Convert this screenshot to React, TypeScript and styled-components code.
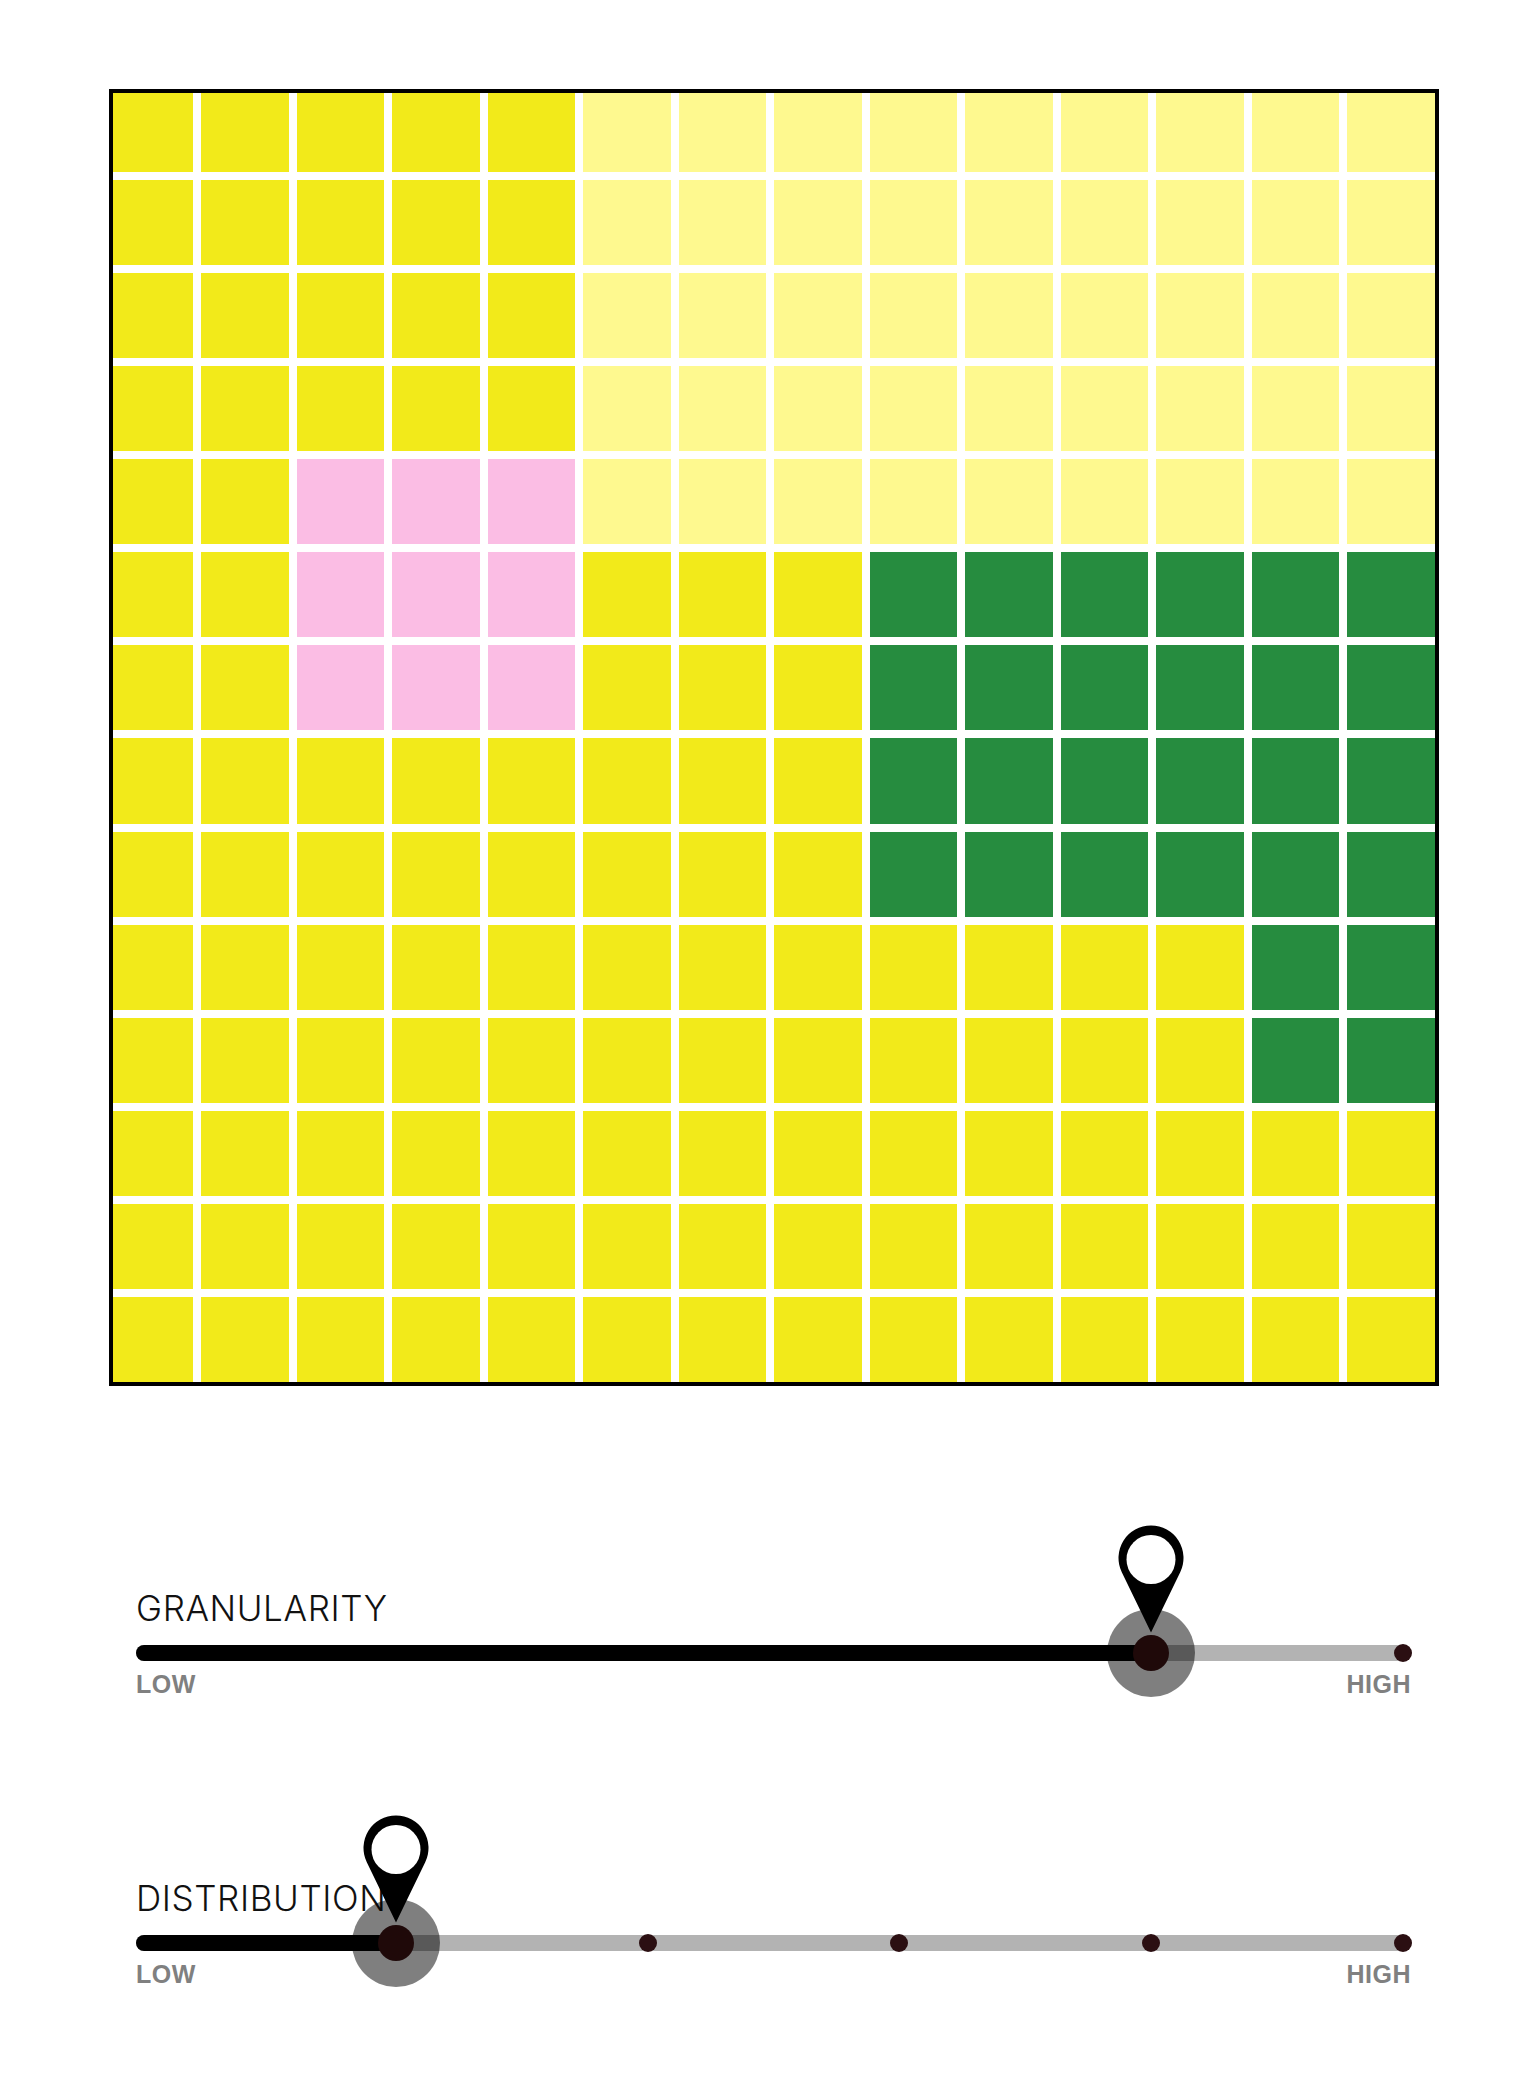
import styled, { createGlobalStyle } from 'styled-components';

type Tone = 'Y' | 'L' | 'P' | 'G';

const toneColors: Record<Tone, string> = {
  Y: '#f2ea1a',
  L: '#fef98f',
  P: '#fbbde4',
  G: '#268c3f',
};

const pattern = [
  'YYYYYLLLLLLLLL',
  'YYYYYLLLLLLLLL',
  'YYYYYLLLLLLLLL',
  'YYYYYLLLLLLLLL',
  'YYPPPLLLLLLLLL',
  'YYPPPYYYGGGGGG',
  'YYPPPYYYGGGGGG',
  'YYYYYYYYGGGGGG',
  'YYYYYYYYGGGGGG',
  'YYYYYYYYYYYYGG',
  'YYYYYYYYYYYYGG',
  'YYYYYYYYYYYYYY',
  'YYYYYYYYYYYYYY',
  'YYYYYYYYYYYYYY',
];

const GlobalStyle = createGlobalStyle`
  body {
    margin: 0;
    background: #fff;
    font-family: Inter, "Liberation Sans", sans-serif;
  }
`;

const Page = styled.div`
  padding: 89px 100px 80px 109px;
  width: 1330px;
`;

const Board = styled.div`
  box-sizing: border-box;
  width: 1330px;
  height: 1297px;
  border: 4px solid #000;
  background: #fff;
  display: grid;
  grid-template-columns: 80px repeat(13, 1fr);
  grid-template-rows: 79px repeat(13, 1fr);
  gap: 8px;
`;

const Cell = styled.div<{ $tone: Tone }>`
  background: ${(p) => toneColors[p.$tone]};
`;

const Controls = styled.div`
  margin-top: 205px;
  padding: 0 28px 0 27px;
  display: flex;
  flex-direction: column;
  gap: 184px;
`;

const SliderBlock = styled.div`
  display: flex;
  flex-direction: column;
`;

const Label = styled.div`
  font-family: Inter, "Liberation Sans", sans-serif;
  font-weight: 300;
  font-size: 35px;
  line-height: 35px;
  letter-spacing: 0.6px;
  color: #111;
`;

const Rail = styled.div`
  position: relative;
  margin-top: 18.5px;
  height: 16px;
  border-radius: 8px;
  background: #b3b3b3;
`;

const Fill = styled.div`
  position: absolute;
  left: 0;
  top: 0;
  height: 16px;
  border-radius: 8px 0 0 8px;
  background: #000;
`;

const Tick = styled.div`
  position: absolute;
  top: -1px;
  width: 18px;
  height: 18px;
  margin-left: -9px;
  border-radius: 50%;
  background: #2b0f12;
`;

const Halo = styled.div`
  position: absolute;
  top: -36px;
  width: 88px;
  height: 88px;
  margin-left: -44px;
  border-radius: 50%;
  background: rgba(0, 0, 0, 0.5);
`;

const Knob = styled.div`
  position: absolute;
  top: -10px;
  width: 36px;
  height: 36px;
  margin-left: -18px;
  border-radius: 50%;
  background: #1f0909;
`;

const Pin = styled.svg`
  position: absolute;
  top: -119.5px;
  width: 66px;
  height: 108px;
  margin-left: -33px;
  display: block;
`;

const Ends = styled.div`
  margin-top: 11.7px;
  display: flex;
  justify-content: space-between;
  font-family: "Liberation Sans", Arial, sans-serif;
  font-weight: 700;
  font-size: 25px;
  line-height: 25px;
  letter-spacing: 0.5px;
  color: #808080;
`;

type SliderProps = {
  label: string;
  step: number;
  steps: number;
};

const at = (f: number) => `calc(8px + (100% - 16px) * ${f})`;

const Slider = ({ label, step, steps }: SliderProps) => {
  const f = step / steps;
  const ticks = [];
  for (let i = step + 1; i <= steps; i++) {
    ticks.push(<Tick key={i} style={{ left: at(i / steps) }} />);
  }
  return (
    <SliderBlock>
      <Label>{label}</Label>
      <Rail>
        <Fill style={{ width: at(f) }} />
        {ticks}
        <Halo style={{ left: at(f) }} />
        <Knob style={{ left: at(f) }} />
        <Pin viewBox="0 0 66 108" style={{ left: at(f) }}>
          <path d="M33 107.5 L3.8 47.2 A32.5 32.5 0 1 1 62.2 47.2 Z" fill="#000" />
          <circle cx="33" cy="34.5" r="24.5" fill="#fff" />
        </Pin>
      </Rail>
      <Ends>
        <span>LOW</span>
        <span>HIGH</span>
      </Ends>
    </SliderBlock>
  );
};

export default function App() {
  return (
    <>
      <GlobalStyle />
      <Page>
        <Board>
          {pattern.map((row, r) =>
            row.split('').map((t, c) => <Cell key={`${r}-${c}`} $tone={t as Tone} />)
          )}
        </Board>
        <Controls>
          <Slider label="GRANULARITY" step={4} steps={5} />
          <Slider label="DISTRIBUTION" step={1} steps={5} />
        </Controls>
      </Page>
    </>
  );
}
